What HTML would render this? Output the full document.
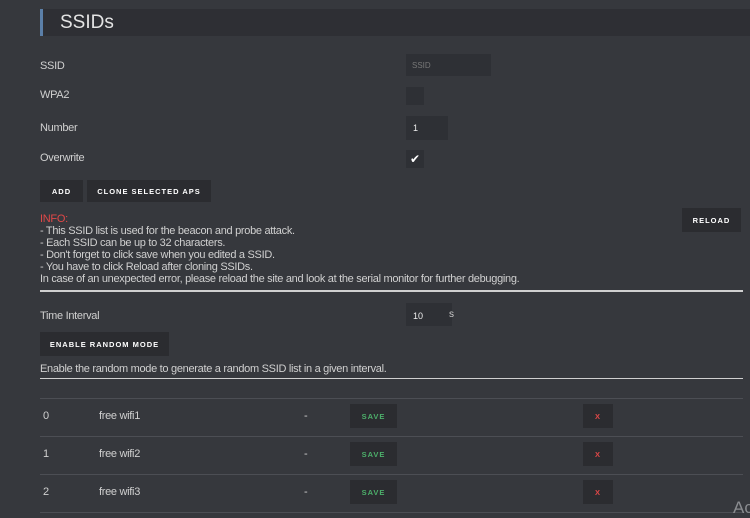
<!DOCTYPE html>
<html><head><style>
*{margin:0;padding:0;box-sizing:border-box}
body{width:750px;height:518px;background:#36383d;font-family:"Liberation Sans",sans-serif;color:#d6d6d6;position:relative;overflow:hidden;font-size:11px}
.a{position:absolute;white-space:nowrap}
.hdr{left:40px;top:9px;width:710px;height:27px;background:#2e2f34}
.bar{left:40px;top:9px;width:3px;height:27px;background:#5b7fa8}
.inp{background:#2e3035}
.btn{background:#2b2c30;color:#fff;font-size:7.5px;font-weight:bold;letter-spacing:1px;display:flex;align-items:center;justify-content:center}
.t{font-size:11px;letter-spacing:-0.3px;color:#d0d0d0}
.line{height:2px;background:#d0d0d0;left:40px;width:703px}
.rl{height:1px;background:#4c4e54;left:40px;width:703px}
</style></head><body>
<div class="a hdr"></div><div class="a bar"></div>
<div class="a" style="left:60px;top:12px;font-size:19px;color:#e4e4e4">SSIDs</div>

<div class="a t" style="left:40px;top:60px">SSID</div>
<div class="a inp" style="left:406px;top:54px;width:85px;height:22px"></div>
<div class="a" style="left:412px;top:61px;font-size:8px;color:#777">SSID</div>
<div class="a t" style="left:40px;top:89px">WPA2</div>
<div class="a inp" style="left:406px;top:87px;width:18px;height:18px"></div>
<div class="a t" style="left:40px;top:122px">Number</div>
<div class="a inp" style="left:406px;top:116px;width:42px;height:24px"></div>
<div class="a" style="left:413px;top:123px;font-size:9px;color:#eee">1</div>
<div class="a t" style="left:40px;top:152px">Overwrite</div>
<div class="a inp" style="left:406px;top:150px;width:18px;height:18px;color:#fff;font-size:12px;text-align:center;line-height:18px">✔</div>

<div class="a btn" style="left:40px;top:180px;width:43px;height:22px">ADD</div>
<div class="a btn" style="left:87px;top:180px;width:124px;height:22px">CLONE SELECTED APS</div>

<div class="a t" style="left:40px;top:213px;line-height:12px">
<span style="color:#e04848">INFO:</span><br>
- This SSID list is used for the beacon and probe attack.<br>
- Each SSID can be up to 32 characters.<br>
- Don't forget to click save when you edited a SSID.<br>
- You have to click Reload after cloning SSIDs.<br>
In case of an unexpected error, please reload the site and look at the serial monitor for further debugging.</div>
<div class="a btn" style="left:682px;top:208px;width:59px;height:24px">RELOAD</div>
<div class="a line" style="top:290px"></div>

<div class="a t" style="left:40px;top:310px">Time Interval</div>
<div class="a inp" style="left:406px;top:303px;width:46px;height:23px"></div>
<div class="a" style="left:413px;top:311px;font-size:9px;color:#eee">10</div>
<div class="a" style="left:449px;top:309px;font-size:10px;color:#ccc">s</div>
<div class="a btn" style="left:40px;top:332px;width:129px;height:24px">ENABLE RANDOM MODE</div>
<div class="a t" style="left:40px;top:363px">Enable the random mode to generate a random SSID list in a given interval.</div>
<div class="a line" style="top:378px;height:1px"></div>

<div class="a rl" style="top:398px"></div>
<div class="a rl" style="top:436px"></div>
<div class="a rl" style="top:474px"></div>
<div class="a rl" style="top:512px"></div>

<div class="a t" style="left:43px;top:410px">0</div>
<div class="a t" style="left:99px;top:410px">free wifi1</div>
<div class="a t" style="left:304px;top:410px">-</div>
<div class="a btn" style="left:350px;top:404px;width:47px;height:24px;color:#4caf6a">SAVE</div>
<div class="a btn" style="left:583px;top:404px;width:30px;height:24px;color:#e04848">X</div>

<div class="a t" style="left:43px;top:448px">1</div>
<div class="a t" style="left:99px;top:448px">free wifi2</div>
<div class="a t" style="left:304px;top:448px">-</div>
<div class="a btn" style="left:350px;top:442px;width:47px;height:24px;color:#4caf6a">SAVE</div>
<div class="a btn" style="left:583px;top:442px;width:30px;height:24px;color:#e04848">X</div>

<div class="a t" style="left:43px;top:486px">2</div>
<div class="a t" style="left:99px;top:486px">free wifi3</div>
<div class="a t" style="left:304px;top:486px">-</div>
<div class="a btn" style="left:350px;top:480px;width:47px;height:24px;color:#4caf6a">SAVE</div>
<div class="a btn" style="left:583px;top:480px;width:30px;height:24px;color:#e04848">X</div>

<div class="a" style="left:733px;top:498px;font-size:17px;color:#8a8c90">Ac</div>
</body></html>
